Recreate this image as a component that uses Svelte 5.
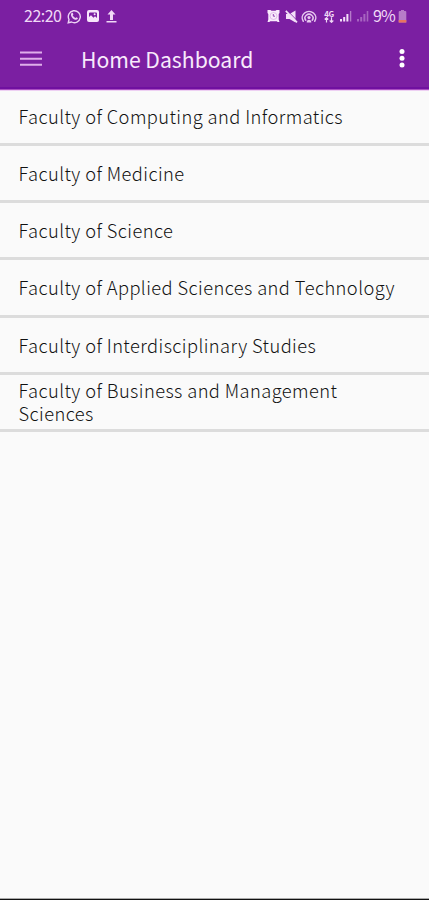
<script>
  const faculties = [
    { name: 'Faculty of Computing and Informatics', height: 56 },
    { name: 'Faculty of Medicine', height: 57 },
    { name: 'Faculty of Science', height: 57 },
    { name: 'Faculty of Applied Sciences and Technology', height: 58 },
    { name: 'Faculty of Interdisciplinary Studies', height: 57 },
    { name: 'Faculty of Business and Management Sciences', height: 57 }
  ];
</script>

<div class="screen">
  <header>
    <div class="status">
      <span class="time">22:20</span>
      <svg class="whatsapp" width="15" height="15" viewBox="0 0 15 15">
        <path d="M1.2 13.8 2 10.5A6 6 0 1 1 4.5 13z" fill="none" stroke="#ecd2f4" stroke-width="1.4" />
        <path d="M4.6 4.1c.8-.7 1.4-.1 1.8 1.3l-.7.9c.6 1.3 1.5 2.1 2.8 2.7l.9-.8c1.3.5 1.9 1.1 1.2 1.9-1.3 1.7-4 .2-5.2-1.1C4.100 7.600 3.300 5.400 4.600 4.100z" fill="#ecd2f4" />
      </svg>
      <svg class="photo" width="12" height="12" viewBox="0 0 12 12">
        <rect width="12" height="12" rx="2" fill="#f7e6fb" />
        <path d="M2 7V3.500q0-1 1-1h6q1 0 1 1V8L8 6.300 6.500 7.800 4 5.300z" fill="#7b1fa2" />
        <circle cx="7.600" cy="4.300" r="1" fill="#f7e6fb" />
      </svg>
      <svg class="upload" width="11" height="13" viewBox="0 0 11 13">
        <path d="M5.500 0 9.500 4.500H7V10H4V4.500H1.500zM.5 11h10v1.600H.5z" fill="#f0d9f6" />
      </svg>
      <span class="grow"></span>
      <svg class="alarm" width="13" height="12" viewBox="0 0 13 12">
        <path d="M.5 0H3.500l1 .8h4l1-.8h3v3L11.700 4v5.500l.8 2.500h-1.800l-1-.8H3.300l-1 .8H.5l.8-2.500V4L.5 3z" fill="#f9eafc" />
        <circle cx="6.500" cy="6" r="3.500" fill="none" stroke="#cfa0dc" stroke-width=".6" />
        <path d="M6.300 4v2.200H8" fill="none" stroke="#8a38ae" stroke-width=".9" />
      </svg>
      <svg class="mute" width="13" height="13" viewBox="0 0 13 13">
        <path d="M1 4h3.500L10.500.5v12L4.500 9H1z" fill="#f3dff8" />
        <path d="M1.800.2 12.500 11" stroke="#7b1fa2" stroke-width="1" />
        <path d="M.8.8 12 12.300" stroke="#f3dff8" stroke-width="1.700" />
      </svg>
      <svg class="hotspot" width="16" height="13" viewBox="0 0 16 13">
        <g fill="none" stroke="#e8c9f0" stroke-width="1.500" stroke-linecap="round">
          <path d="M2.300 11.200A6.800 6.300 0 1 1 13.700 11.200" />
          <path d="M4.800 10.200A4 3.700 0 1 1 11.200 10.200" />
        </g>
        <circle cx="8" cy="7.500" r="1.600" fill="#e8c9f0" />
        <path d="M5.700 12.500q0-2.800 2.300-2.800t2.300 2.800z" fill="#e8c9f0" />
      </svg>
      <span class="network">
        <span class="generation">4G</span>
        <svg width="10" height="6" viewBox="0 0 10 6">
          <path d="M2.500 5.500V.8M.7 2.500 2.500.7l1.800 1.800M7.500.3v4.900M5.700 3.500l1.800 1.800 1.800-1.800" fill="none" stroke="#f0d9f6" stroke-width="1.200" />
        </svg>
      </span>
      <svg class="signal" width="12" height="12" viewBox="0 0 12 12">
        <path d="M0 9h2v2.500H0zM3.200 7h2v4.500h-2zM6.400 4h2v7.500h-2z" fill="#f3dff8" />
        <path d="M9.900 1h1.400v10.500H9.900z" fill="#b57aca" />
      </svg>
      <svg class="signal second" width="12" height="12" viewBox="0 0 12 12">
        <path d="M0 9h2v2.500H0zM3.200 7h2v4.500h-2zM6.400 4h2v7.500h-2zM9.700 1h1.600v10.500H9.700z" fill="#a764c0" />
      </svg>
      <span class="percent">9%</span>
      <svg class="battery" width="9" height="13" viewBox="0 0 9 13">
        <path d="M3 0h3v1h1.300Q8.300 1 8.300 2v10.500H.7V2q0-1 1-1H3z" fill="#b77cc8" />
        <path d="M.7 10h7.600v2.500H.7z" fill="#e8745f" />
      </svg>
    </div>
    <div class="toolbar">
      <svg class="menu" width="22" height="16" viewBox="0 0 22 16">
        <path d="M0 1.500h22M0 7.700h22M0 13.700h22" stroke="#dfaeea" stroke-width="2.100" />
      </svg>
      <h1>Home Dashboard</h1>
      <svg class="more" width="6" height="20" viewBox="0 0 6 20">
        <circle cx="3" cy="2.600" r="2.500" fill="#fff" />
        <circle cx="3" cy="9.300" r="2.500" fill="#fff" />
        <circle cx="3" cy="16" r="2.500" fill="#fff" />
      </svg>
    </div>
  </header>

  <ul>
    {#each faculties as faculty}
      <li style:height="{faculty.height}px">{faculty.name}</li>
    {/each}
  </ul>
  <footer></footer>
</div>

<style>
  :global(body) { margin: 0; }
  .screen {
    display: flex;
    flex-direction: column;
    height: 900px;
    background: #fafafa;
    font-family: "Noto Sans CJK SC", "Noto Sans", sans-serif;
  }
  header {
    box-sizing: border-box;
    height: 90px;
    background: #7b1fa2;
    border-bottom: 1px solid #a94fc0;
    box-shadow: inset 0 -2px 0 #7010a0, 0 1px 0 #eed0f3;
    flex: none;
  }
  .status {
    display: flex;
    align-items: center;
    height: 32px;
    padding: 0 22px 0 24px;
    color: #f0d9f6;
    font-size: 16px;
  }
  svg { flex: none; }
  .time { width: 43px; line-height: 30px; margin-bottom: 2px; letter-spacing: -0.5px; white-space: nowrap; }
  .photo { margin-left: 5px; }
  .upload { margin-left: 7px; }
  .grow { flex: 1; }
  .mute { margin-left: 5px; }
  .hotspot { margin-left: 3px; }
  .network { display: flex; flex-direction: column; align-items: center; width: 12px; margin-left: 6px; }
  .generation { height: 7px; font: bold 8px/7px "Noto Sans CJK SC", sans-serif; letter-spacing: -0.4px; }
  .signal { margin-left: 5px; }
  .percent { width: 23px; margin-left: 4px; line-height: 30px; margin-bottom: 2px; letter-spacing: -0.8px; white-space: nowrap; }
  .battery { margin-left: 2px; }
  .toolbar {
    display: flex;
    align-items: center;
    height: 53px;
    padding: 0 24px 0 20px;
  }
  h1 {
    flex: 1;
    margin: 0 0 0 39px;
    color: #f8eafb;
    font-size: 21.2px;
    line-height: 32px;
    font-weight: 400;
    white-space: nowrap;
  }
  ul { flex: 1; list-style: none; margin: 0; padding: 0; }
  li {
    box-sizing: border-box;
    display: flex;
    flex-direction: column;
    justify-content: center;
    padding: 0 18px 0 18.5px;
    border-bottom: 3px solid #dcdcdc;
    color: #111;
    font-size: 18.3px;
    font-weight: 300;
    line-height: 23px;
    letter-spacing: 0.42px;
  }
  footer { height: 1px; flex: none; background: #111; border-top: 1px solid #aaa; }
</style>
